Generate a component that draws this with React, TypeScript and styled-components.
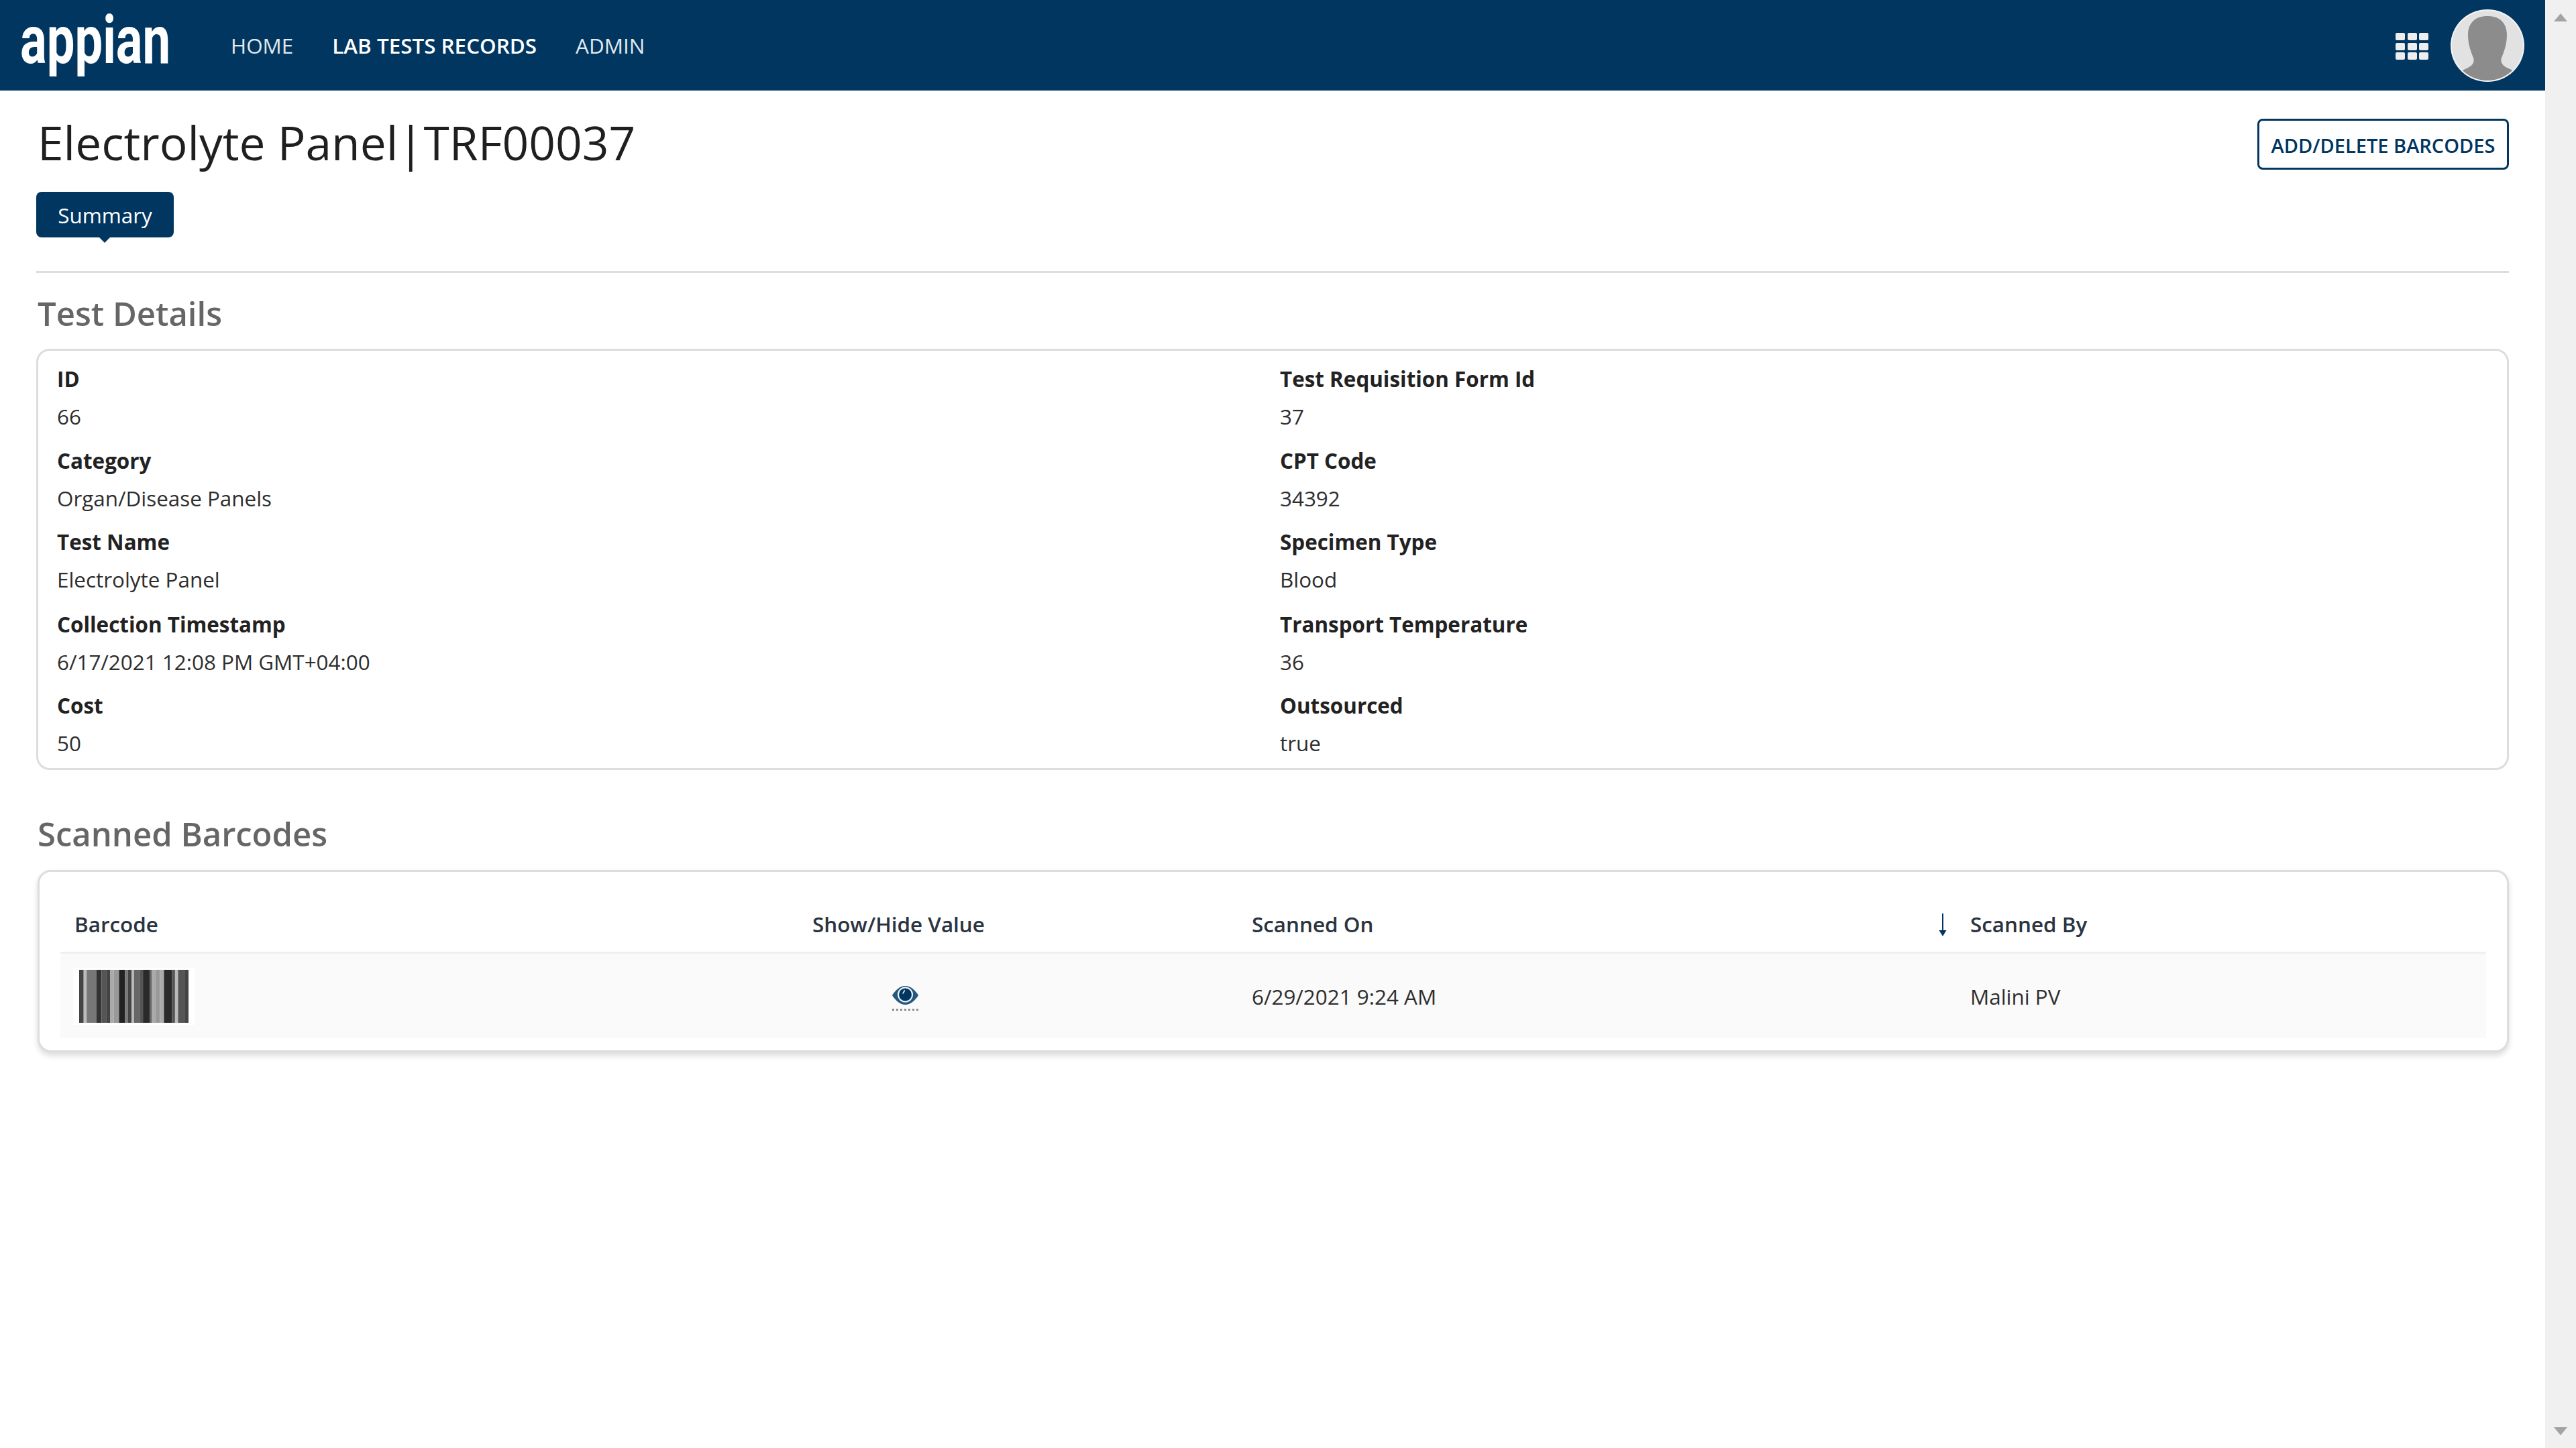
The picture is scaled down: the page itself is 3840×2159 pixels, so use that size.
import React from "react";
import styled, { createGlobalStyle } from "styled-components";

const colors = {
  navy: "#003660",
  text: "#2e2e2e",
  heading: "#666666",
  line: "#dddddd",
  track: "#f0f0f0",
  arrow: "#a3a3a3",
  rowBg: "#fafafa",
};

const GlobalStyle = createGlobalStyle`
  html, body {
    margin: 0;
    padding: 0;
    background: #fff;
  }
  body {
    font-family: "Open Sans", "Liberation Sans", sans-serif;
    font-size: 31.4px;
    color: ${colors.text};
  }
`;

const Page = styled.div`
  display: flex;
  height: 2159px;
  overflow: hidden;
`;

const Main = styled.div`
  flex: 1;
  min-width: 0;
`;

const Scrollbar = styled.div`
  width: 46px;
  background: ${colors.track};
  display: flex;
  flex-direction: column;
  justify-content: space-between;
  align-items: center;
  padding: 20px 0 19px;
  box-sizing: border-box;
`;

const ScrollArrow = styled.div<{ $down?: boolean }>`
  width: 0;
  height: 0;
  border-left: 10px solid transparent;
  border-right: 10px solid transparent;
  ${(p) =>
    p.$down
      ? `border-top: 12px solid ${colors.arrow};`
      : `border-bottom: 12px solid ${colors.arrow};`}
`;

const TopBar = styled.header`
  height: 135px;
  background: ${colors.navy};
  display: flex;
  align-items: center;
  padding: 0 31px 0 30px;
  box-sizing: border-box;
`;

const Logo = styled.div`
  width: 222px;
  height: 130px;
  flex: none;
`;

const LogoText = styled.span`
  display: block;
  font-family: Roboto, "Open Sans", sans-serif;
  font-weight: 700;
  font-size: 100px;
  line-height: 130px;
  color: #ffffff;
  white-space: nowrap;
  width: max-content;
  transform-origin: left center;
  transform: translateY(-8px) scaleX(0.742);
`;

const Nav = styled.nav`
  display: flex;
  gap: 58px;
  margin-left: 92px;
  flex: 1;
`;

const NavItem = styled.span<{ $active?: boolean }>`
  line-height: 40px;
  color: ${(p) => (p.$active ? "#ffffff" : "#e3e9ee")};
  font-weight: ${(p) => (p.$active ? 600 : 400)};
`;

const AppGrid = styled.div`
  display: grid;
  grid-template-columns: repeat(3, 14px);
  grid-auto-rows: 11px;
  gap: 3.5px;
  margin-right: 33px;
  margin-top: 3px;
`;

const AppCell = styled.span`
  background: #eeeeee;
  border-radius: 2px;
`;

const Avatar = styled.svg`
  width: 110px;
  height: 108px;
  flex: none;
`;

const Content = styled.main`
  padding: 42px 54px 0;
`;

const TitleRow = styled.div`
  display: flex;
  justify-content: space-between;
  align-items: flex-start;
`;

const Title = styled.h1`
  margin: -11px 0 0 2px;
  font-size: 69.5px;
  line-height: 92px;
  font-weight: 400;
  color: #1f1f1f;
`;

const OutlineButton = styled.button`
  width: 375px;
  height: 76px;
  background: #fff;
  border: 3px solid ${colors.navy};
  border-radius: 8px;
  color: ${colors.navy};
  font: 600 29px "Open Sans", sans-serif;
  padding: 2px 0 0;
`;

const Tab = styled.div`
  position: relative;
  width: 205px;
  height: 68px;
  margin-top: 28px;
  background: ${colors.navy};
  color: #fff;
  border-radius: 8px;
  display: flex;
  align-items: center;
  justify-content: center;
  &::after {
    content: "";
    position: absolute;
    left: 94px;
    top: 100%;
    border-left: 8px solid transparent;
    border-right: 8px solid transparent;
    border-top: 8px solid ${colors.navy};
  }
`;

const Divider = styled.hr`
  border: 0;
  height: 3px;
  background: ${colors.line};
  margin: 50px 0 0;
`;

const SectionTitle = styled.h2<{ $top: number }>`
  margin: ${(p) => p.$top}px 0 0 2px;
  font-size: 49px;
  line-height: 68px;
  font-weight: 600;
  color: ${colors.heading};
`;

const Card = styled.section`
  border: 3px solid ${colors.line};
  border-radius: 20px;
  background: #fff;
  box-sizing: border-box;
`;

const DetailsCard = styled(Card)`
  margin-top: 19px;
  height: 628px;
  padding: 20px 28px 0;
  display: grid;
  grid-template-columns: 1823px 1fr;
  grid-template-rows: 122px 121px 123px 121px 120px;
`;

const Field = styled.div`
  display: flex;
  flex-direction: column;
`;

const FieldLabel = styled.span`
  font-weight: 700;
  line-height: 44px;
  color: #222222;
`;

const FieldValue = styled.span`
  line-height: 44px;
  margin-top: 12px;
`;

const TableCard = styled(Card)`
  margin-top: 20px;
  height: 272px;
  padding: 0 31px;
  margin-left: 2px;
  box-shadow: 0 5px 8px rgba(0, 0, 0, 0.14);
`;

const TableGrid = styled.div`
  display: grid;
  grid-template-columns: 1100px 655px 1071px 1fr;
`;

const HeadCell = styled.div`
  position: relative;
  height: 122px;
  padding-left: 21px;
  display: flex;
  align-items: center;
  font-weight: 600;
  padding-top: 35px;
  box-sizing: border-box;
  border-bottom: 3px solid #efefef;
  color: #2b3440;
`;

const SortArrow = styled.svg`
  position: absolute;
  left: -26px;
  top: 62px;
  width: 12px;
  height: 34px;
`;

const BodyCell = styled.div`
  height: 126px;
  background: ${colors.rowBg};
  padding-left: 21px;
  display: flex;
  align-items: center;
  box-sizing: border-box;
`;

const BarcodeFrame = styled.div`
  background: #fff;
  padding: 3px 9px;
  margin: 0 0 0 -2px;
  display: flex;
`;

const Barcode = styled.svg`
  width: 163px;
  height: 79px;
  display: block;
`;

const EyeLink = styled.a`
  display: block;
  margin: 6px 0 0 119px;
  padding-bottom: 6px;
  border-bottom: 3px dotted #8d8d8d;
  line-height: 0;
`;

const Eye = styled.svg`
  width: 39px;
  height: 28px;
`;

const fields = [
  ["ID", "66", "Test Requisition Form Id", "37"],
  ["Category", "Organ/Disease Panels", "CPT Code", "34392"],
  ["Test Name", "Electrolyte Panel", "Specimen Type", "Blood"],
  ["Collection Timestamp", "6/17/2021 12:08 PM GMT+04:00", "Transport Temperature", "36"],
  ["Cost", "50", "Outsourced", "true"],
];

// blurred grey bands, as the barcode image looks once scaled up
const bars: [number, string][] = [
  [15, "#444"], [10, "#bbb"], [32, "#777"], [18, "#333"], [15, "#555"], [13, "#444"],
  [12, "#aaa"], [18, "#999"], [20, "#222"], [10, "#777"], [12, "#444"], [8, "#bbb"],
  [17, "#666"], [13, "#555"], [22, "#2a2a2a"], [8, "#666"], [12, "#aaa"], [15, "#999"],
  [13, "#aaa"], [27, "#2a2a2a"], [10, "#555"], [10, "#bbb"], [20, "#555"], [15, "#444"],
];

function BarcodeImage() {
  let x = 0;
  return (
    <Barcode viewBox="0 0 365 79" preserveAspectRatio="none">
      {bars.map(([w, fill], i) => {
        const rect = <rect key={i} x={x} y={0} width={w} height={79} fill={fill} />;
        x += w;
        return rect;
      })}
    </Barcode>
  );
}

export default function App() {
  return (
    <Page>
      <GlobalStyle />
      <Main>
        <TopBar>
          <Logo>
            <LogoText>appian</LogoText>
          </Logo>
          <Nav>
            <NavItem>HOME</NavItem>
            <NavItem $active>LAB TESTS RECORDS</NavItem>
            <NavItem>ADMIN</NavItem>
          </Nav>
          <AppGrid>
            {Array.from({ length: 9 }, (_, i) => (
              <AppCell key={i} />
            ))}
          </AppGrid>
          <Avatar viewBox="0 0 110 108">
            <defs>
              <clipPath id="avatarClip">
                <ellipse cx="55" cy="54" rx="53" ry="52" />
              </clipPath>
            </defs>
            <ellipse cx="55" cy="54" rx="55" ry="54" fill="#f4f4f4" />
            <ellipse cx="55" cy="54" rx="53" ry="52" fill="#e2e2e2" />
            <path
              clipPath="url(#avatarClip)"
              d="M55 10C37 10 26 20 26 38c0 15 5 27 8 34 2 7-1 11-8 15-7 3-12 6-16 10l22 14h48l20-14c-5-5-10-8-16-10-7-4-10-8-8-15 3-7 8-19 8-34C84 20 73 10 55 10z"
              fill="#8c8c8c"
            />
          </Avatar>
        </TopBar>
        <Content>
          <TitleRow>
            <Title>Electrolyte Panel|TRF00037</Title>
            <OutlineButton>ADD/DELETE BARCODES</OutlineButton>
          </TitleRow>
          <Tab>Summary</Tab>
          <Divider />
          <SectionTitle $top={26}>Test Details</SectionTitle>
          <DetailsCard>
            {fields.map(([l1, v1, l2, v2]) => (
              <React.Fragment key={l1}>
                <Field>
                  <FieldLabel>{l1}</FieldLabel>
                  <FieldValue>{v1}</FieldValue>
                </Field>
                <Field>
                  <FieldLabel>{l2}</FieldLabel>
                  <FieldValue>{v2}</FieldValue>
                </Field>
              </React.Fragment>
            ))}
          </DetailsCard>
          <SectionTitle $top={61}>Scanned Barcodes</SectionTitle>
          <TableCard>
            <TableGrid>
              <HeadCell>Barcode</HeadCell>
              <HeadCell>Show/Hide Value</HeadCell>
              <HeadCell>Scanned On</HeadCell>
              <HeadCell>
                <SortArrow viewBox="0 0 12 34">
                  <path d="M5 0h2v25h4.5L6 34 .5 25H5z" fill={colors.navy} />
                </SortArrow>
                Scanned By
              </HeadCell>
              <BodyCell>
                <BarcodeFrame>
                  <BarcodeImage />
                </BarcodeFrame>
              </BodyCell>
              <BodyCell>
                <EyeLink>
                  <Eye viewBox="0 0 39 28">
                    <path d="M0 14C5 6 12 0 19.5 0S34 6 39 14c-5 8-12 14-19.5 14S5 22 0 14z" fill="#24587f" />
                    <circle cx="19.5" cy="13" r="11.5" fill="#f4f6f8" />
                    <circle cx="19.5" cy="13" r="9.5" fill={colors.navy} />
                    <path d="M15 11l3-5 1.5 1-3 5z" fill="#d9e2ea" />
                  </Eye>
                </EyeLink>
              </BodyCell>
              <BodyCell>6/29/2021 9:24 AM</BodyCell>
              <BodyCell>Malini PV</BodyCell>
            </TableGrid>
          </TableCard>
        </Content>
      </Main>
      <Scrollbar>
        <ScrollArrow />
        <ScrollArrow $down />
      </Scrollbar>
    </Page>
  );
}
